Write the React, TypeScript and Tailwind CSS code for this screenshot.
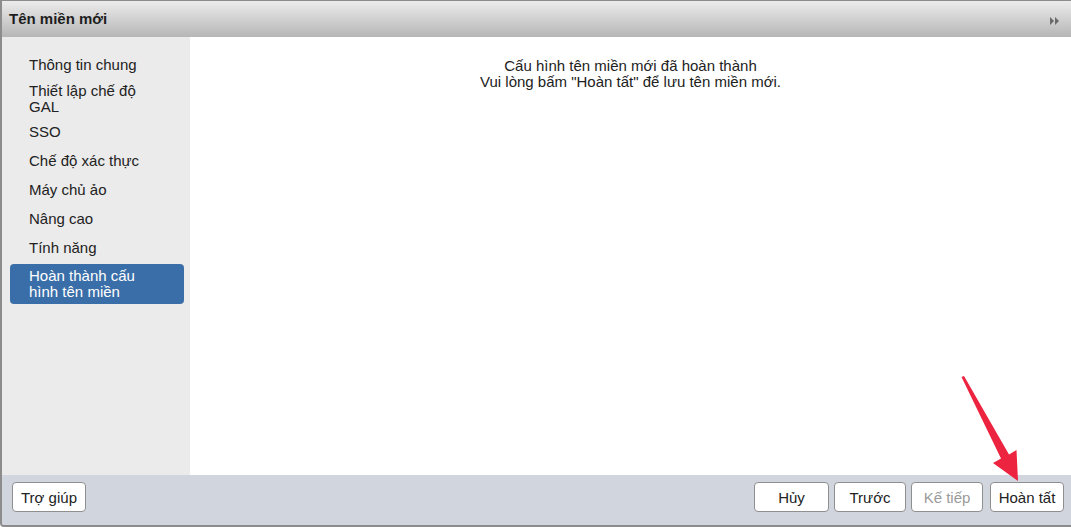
import React from "react";

const navItems = [
  { label: "Thông tin chung", cls: "py-[4px]" },
  { label: "Thiết lập chế độ GAL", cls: "pt-[1px] pb-0 pr-[40px]" },
  { label: "SSO", cls: "py-[4px]" },
  { label: "Chế độ xác thực", cls: "py-[4px]" },
  { label: "Máy chủ ảo", cls: "py-[4px]" },
  { label: "Nâng cao", cls: "py-[4px]" },
  { label: "Tính năng", cls: "py-[4px]" },
];

const FooterButton: React.FC<{ label: string; disabled?: boolean; className?: string }> = ({
  label,
  disabled,
  className = "",
}) => (
  <button
    className={`h-[30px] rounded-[4px] border border-[#8f8f8f] bg-white text-[15px] leading-none ${
      disabled ? "text-[#9a9a9a]" : "text-[#222]"
    } ${className}`}
  >
    {label}
  </button>
);

export default function App() {
  return (
    <div
      className="relative w-[1071px] h-[527px] overflow-hidden bg-white"
      style={{ fontFamily: '"Liberation Sans", Arial, sans-serif' }}
    >
      <div className="flex h-full flex-col border-l-2 border-b-2 border-t border-[#8c8c8c] rounded-bl-[4px] overflow-hidden">
        {/* Title bar */}
        <div className="flex h-[36px] shrink-0 items-center justify-between bg-gradient-to-b from-[#ececec] to-[#b6b6b6] pl-[7px] pr-[10px]">
          <span className="text-[15px] font-bold text-[#1e1e1e]">Tên miền mới</span>
          <svg width="12" height="8" viewBox="0 0 12 8" className="mt-[4px]">
            <path d="M1 0 L5 4 L1 8 Z" fill="#6a6a6a" />
            <path d="M6 0 L10 4 L6 8 Z" fill="#6a6a6a" />
          </svg>
        </div>

        {/* Body */}
        <div className="flex min-h-0 flex-1">
          <div className="w-[188px] shrink-0 bg-[#ebebeb] pl-[8px] pr-[6px] pt-[16px]">
            <ul className="flex flex-col gap-[5px] text-[15px] leading-[16px] text-[#222]">
              {navItems.map((item, i) => (
                <li key={i} className={`pl-[19px] ${item.cls}`}>
                  {item.label}
                </li>
              ))}
              <li className="-mt-[1px] rounded-[4px] bg-[#3a6ea8] py-[4px] pl-[19px] pr-[30px] text-white">
                Hoàn thành cấu hình tên miền
              </li>
            </ul>
          </div>
          <div className="flex-1 bg-white pt-[21px] text-center text-[15px] leading-[16px] text-[#222]">
            <p>Cấu hình tên miền mới đã hoàn thành</p>
            <p>Vui lòng bấm "Hoàn tất" để lưu tên miền mới.</p>
          </div>
        </div>

        {/* Footer */}
        <div className="flex h-[50px] shrink-0 items-start justify-between bg-[#d1d5de] pl-[10px] pr-[7px] pt-[7px]">
          <FooterButton label="Trợ giúp" className="w-[74px]" />
          <div className="flex">
            <FooterButton label="Hủy" className="w-[75px]" />
            <FooterButton label="Trước" className="ml-[5px] w-[72px]" />
            <FooterButton label="Kế tiếp" disabled className="ml-[5px] w-[72px]" />
            <FooterButton label="Hoàn tất" className="ml-[7px] w-[74px]" />
          </div>
        </div>
      </div>

      {/* Annotation arrow */}
      <svg
        className="pointer-events-none absolute left-0 top-0"
        width="1071"
        height="527"
        viewBox="0 0 1071 527"
      >
        <polygon
          points="961.5,377 964,376 1009,454.5 1016.5,450 1018,481 993,463 1001,458.5"
          fill="#ec2440"
        />
      </svg>
    </div>
  );
}
